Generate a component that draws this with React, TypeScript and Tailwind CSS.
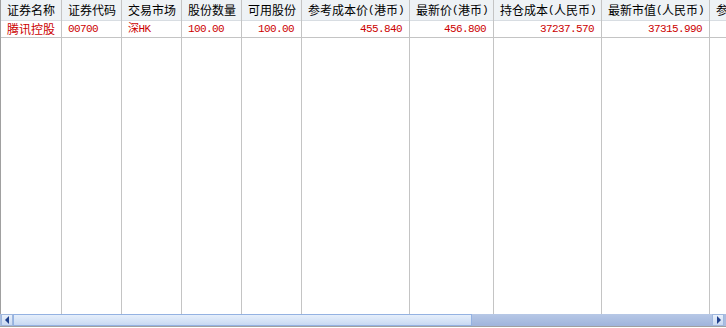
const font = { fontFamily: '"Noto Sans CJK SC", "Liberation Sans", sans-serif' };
const mono = { fontFamily: '"Liberation Mono", "Noto Sans CJK SC", monospace' };

interface Col {
  title: string;
  width: string;
  value: string;
  align: 'left' | 'right';
  mono?: boolean;
}

const columns: Col[] = [
  { title: '证券名称', width: 'w-[61px]', value: '腾讯控股', align: 'left' },
  { title: '证券代码', width: 'w-[60px]', value: '00700', align: 'left', mono: true },
  { title: '交易市场', width: 'w-[60px]', value: '深HK', align: 'left', mono: true },
  { title: '股份数量', width: 'w-[60px]', value: '100.00', align: 'left', mono: true },
  { title: '可用股份', width: 'w-[60px]', value: '100.00', align: 'right', mono: true },
  { title: '参考成本价(港币)', width: 'w-[108px]', value: '455.840', align: 'right', mono: true },
  { title: '最新价(港币)', width: 'w-[84px]', value: '456.800', align: 'right', mono: true },
  { title: '持仓成本(人民币)', width: 'w-[108px]', value: '37237.570', align: 'right', mono: true },
  { title: '最新市值(人民币)', width: 'w-[108px]', value: '37315.990', align: 'right', mono: true },
];

// half-width parens as in the bitmap font: 6px each
function Title({ text }: { text: string }) {
  const parts = text.split(/([()])/);
  return (
    <>
      {parts.map((p, i) =>
        p === '(' || p === ')' ? (
          <span key={i} className="inline-block w-[6px] text-center text-[11px]" style={mono}>
            {p}
          </span>
        ) : (
          <span key={i}>{p}</span>
        )
      )}
    </>
  );
}

function Column({ col }: { col: Col }) {
  return (
    <div className={`${col.width} shrink-0 flex flex-col border-r border-[#c4c4c4]`}>
      <div className="h-[21px] bg-[#eef2f5] border-b border-[#d8dde2] pl-[6px] flex items-center text-[12px] text-black whitespace-nowrap overflow-hidden">
        <Title text={col.title} />
      </div>
      <div
        className={`h-[17px] border-b border-[#c4c4c4] flex items-center text-[12px] text-[#cc0000] whitespace-nowrap overflow-hidden ${
          col.align === 'right' ? 'justify-end pr-[7px]' : 'pl-[6px]'
        }`}
      >
        {col.mono ? (
          <span className="text-[11px] tracking-[-0.6px]" style={mono}>
            {col.value}
          </span>
        ) : (
          col.value
        )}
      </div>
      <div className="flex-1" />
    </div>
  );
}

function ScrollBar() {
  return (
    <div className="h-[13px] flex items-stretch bg-[#a9bde0] pl-[1px] pr-[2px] border-b border-[#a0a0a0]">
      <div className="w-[12px] flex items-center justify-center bg-gradient-to-b from-[#eaf1fb] to-[#c9d9f1] border border-[#9fb7de]">
        <svg width="5" height="8" viewBox="0 0 5 8">
          <path d="M4 0 L0 4 L4 8 Z" fill="#1e3f8c" />
        </svg>
      </div>
      <div className="w-[459px] bg-gradient-to-b from-[#e6effb] to-[#c8d9f2] border border-[#94b2e2]" />
      <div className="flex-1 bg-gradient-to-b from-[#b7c8e6] to-[#9fb4dc]" />
      <div className="w-[12px] flex items-center justify-center bg-gradient-to-b from-[#eaf1fb] to-[#c9d9f1] border border-[#9fb7de]">
        <svg width="5" height="8" viewBox="0 0 5 8">
          <path d="M1 0 L5 4 L1 8 Z" fill="#1e3f8c" />
        </svg>
      </div>
    </div>
  );
}

export default function App() {
  return (
    <div className="w-[726px] h-[328px] bg-white flex flex-col overflow-hidden" style={font}>
      <div className="flex-1 flex border-l border-[#a0a0a0] overflow-hidden">
        {columns.map((c) => (
          <Column key={c.title} col={c} />
        ))}
        <div className="flex-1 min-w-0 flex flex-col">
          <div className="h-[21px] bg-[#eef2f5] border-b border-[#d8dde2] pl-[6px] flex items-center text-[12px] text-black whitespace-nowrap overflow-hidden">
            参考
          </div>
          <div className="h-[17px] border-b border-[#c4c4c4]" />
        </div>
      </div>
      <ScrollBar />
      <div className="h-[1px] bg-white" />
    </div>
  );
}
